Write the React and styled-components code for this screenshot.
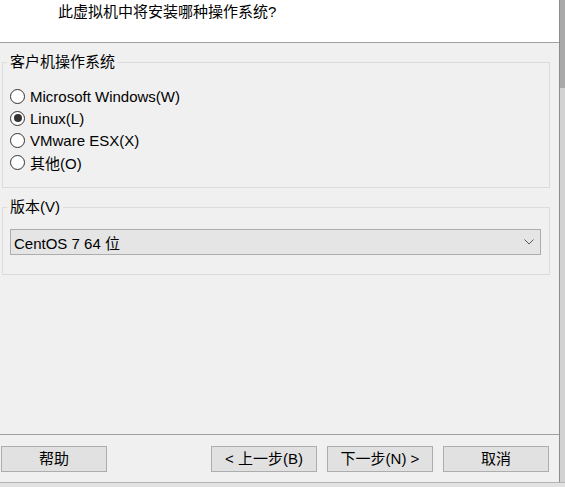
import React, { useState } from "react";
import styled, { createGlobalStyle } from "styled-components";

const GlobalStyle = createGlobalStyle`
  html, body {
    margin: 0;
    padding: 0;
    background: #dcdcdc;
  }
  * {
    box-sizing: border-box;
  }
`;

const FONT = `"Liberation Sans", "Noto Sans CJK SC", sans-serif`;

const Screen = styled.div`
  width: 565px;
  height: 487px;
  display: flex;
  flex-direction: column;
  overflow: hidden;
  font-family: ${FONT};
  font-size: 15px;
  color: #000;
`;

const Row = styled.div`
  display: flex;
  height: 482px;
`;

const Dialog = styled.div`
  width: 559px;
  display: flex;
  flex-direction: column;
  background: #f0f0f0;
`;

const Edge = styled.div`
  flex: 1;
  border-left: 1px solid #8c8c8c;
  background: linear-gradient(#a9a9a9 0, #a9a9a9 88px, #d2d2d2 88px);
`;

const BottomEdge = styled.div`
  flex: 1;
  border-top: 1px solid #b4b4b4;
  background: #e2e2e2;
`;

const Header = styled.div`
  height: 43px;
  background: #fff;
  border-bottom: 1px solid #a0a0a0;
  padding-left: 58px;
  line-height: 23px;
`;

const Body = styled.div`
  flex: 1;
  padding: 9px 9px 0 2px;
`;

const Group = styled.fieldset`
  margin: 0 0 9px 0;
  border: 1px solid #dcdcdc;
  padding: ${(p) => p.$pad};
  min-width: 0;
`;

const Legend = styled.legend`
  padding: 0 3px;
  margin-left: -3px;
  line-height: 20px;
`;

const RadioRow = styled.label`
  display: flex;
  align-items: center;
  gap: 5px;
  height: 22px;
  cursor: default;
`;

const Circle = styled.span`
  flex-shrink: 0;
  width: 15px;
  height: 15px;
  border: 1px solid #333;
  border-radius: 50%;
  background: #fff;
  display: flex;
  align-items: center;
  justify-content: center;
  &::after {
    content: "";
    width: 8px;
    height: 8px;
    border-radius: 50%;
    background: #333;
    display: ${(p) => (p.$on ? "block" : "none")};
  }
`;

const Select = styled.div`
  height: 26px;
  background: #e5e5e5;
  border: 1px solid #adadad;
  display: flex;
  align-items: center;
  justify-content: space-between;
  padding: 0 6px 0 3px;
`;

const Footer = styled.div`
  height: 48px;
  border-top: 1px solid #a0a0a0;
  padding: 11px 10px 10px 1px;
  display: flex;
  gap: 10px;
`;

const Spacer = styled.div`
  flex: 1;
`;

const Button = styled.button`
  width: 106px;
  height: 26px;
  background: #e1e1e1;
  border: 1px solid #adadad;
  font-family: ${FONT};
  font-size: 15px;
  color: #000;
  padding: 0;
  line-height: 22px;
`;

const systems = [
  { key: "win", label: "Microsoft Windows(W)" },
  { key: "linux", label: "Linux(L)" },
  { key: "esx", label: "VMware ESX(X)" },
  { key: "other", label: "其他(O)" },
];

function Chevron() {
  return (
    <svg width="10" height="6" viewBox="0 0 10 6">
      <polyline points="0.5,0.5 5,5 9.5,0.5" fill="none" stroke="#5a5a5a" strokeWidth="1" />
    </svg>
  );
}

export default function App() {
  const [os, setOs] = useState("linux");
  return (
    <Screen>
      <GlobalStyle />
      <Row>
        <Dialog>
          <Header>此虚拟机中将安装哪种操作系统?</Header>
          <Body>
            <Group $pad="13px 7px 14px 7px">
              <Legend>客户机操作系统</Legend>
              {systems.map((s) => (
                <RadioRow key={s.key} onClick={() => setOs(s.key)}>
                  <Circle $on={os === s.key} />
                  {s.label}
                </RadioRow>
              ))}
            </Group>
            <Group $pad="12px 8px 19px 7px">
              <Legend>版本(V)</Legend>
              <Select>
                <span>CentOS 7 64 位</span>
                <Chevron />
              </Select>
            </Group>
          </Body>
          <Footer>
            <Button>帮助</Button>
            <Spacer />
            <Button>&lt; 上一步(B)</Button>
            <Button>下一步(N) &gt;</Button>
            <Button>取消</Button>
          </Footer>
        </Dialog>
        <Edge />
      </Row>
      <BottomEdge />
    </Screen>
  );
}
